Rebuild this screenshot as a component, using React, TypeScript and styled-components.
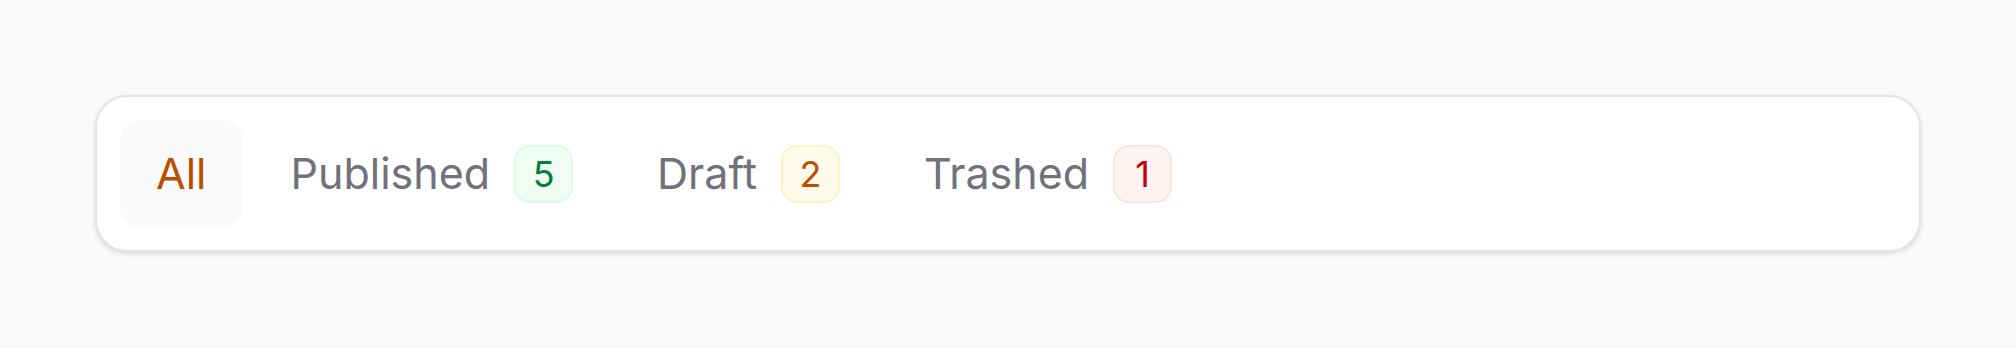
import * as React from 'react';
import styled, { createGlobalStyle } from 'styled-components';

const GlobalStyle = createGlobalStyle`
  html, body {
    margin: 0;
    padding: 0;
    background: #fafafa;
    font-family: Inter, "Noto Sans", sans-serif;
  }
`;

type Tone = 'green' | 'amber' | 'red';

const tones: Record<Tone, { fg: string; bg: string; border: string }> = {
    green: { fg: '#008236', bg: '#f0fdf4', border: '#dcfce7' },
    amber: { fg: '#bb4d00', bg: '#fffbeb', border: '#fef3c6' },
    red: { fg: '#c10007', bg: '#fef2f2', border: '#ffe2e2' },
};

const Page = styled.div`
  padding: 95px 95px 96px 95px;
`;

const Bar = styled.nav`
  display: flex;
  align-items: center;
  gap: 12px;
  padding: 23px;
  background: #ffffff;
  border: 2px solid #e5e5e5;
  border-radius: 32px;
  box-shadow: 0 2px 5px rgba(0, 0, 0, 0.12);
`;

const Tab = styled.button<{ $active?: boolean }>`
  display: inline-flex;
  align-items: center;
  gap: 24px;
  box-sizing: border-box;
  height: 107px;
  padding: 0 36px;
  border: none;
  border-radius: 20px;
  background: ${(p) => (p.$active ? '#fafafa' : 'transparent')};
  color: ${(p) => (p.$active ? '#bb4d00' : '#71717b')};
  font-family: inherit;
  font-size: 43px;
  line-height: 63px;
  font-weight: 400;
  cursor: pointer;
`;

const Count = styled.span<{ $tone: Tone }>`
  display: inline-flex;
  align-items: center;
  justify-content: center;
  box-sizing: border-box;
  min-width: 59px;
  height: 58px;
  padding: 0 16px;
  border-radius: 16px;
  border: 2px solid ${(p) => tones[p.$tone].border};
  background: ${(p) => tones[p.$tone].bg};
  color: ${(p) => tones[p.$tone].fg};
  font-size: 36px;
  line-height: 1;
`;

interface Filter {
    label: string;
    count?: number;
    tone?: Tone;
}

const filters: Filter[] = [
    { label: 'All' },
    { label: 'Published', count: 5, tone: 'green' },
    { label: 'Draft', count: 2, tone: 'amber' },
    { label: 'Trashed', count: 1, tone: 'red' },
];

export default function App(): JSX.Element {
    const [active, setActive] = React.useState('All');

    return (
        <Page>
            <GlobalStyle />
            <Bar>
                {filters.map((f) => (
                    <Tab key={f.label} $active={active === f.label} onClick={() => setActive(f.label)}>
                        {f.label}
                        {f.count !== undefined && f.tone && <Count $tone={f.tone}>{f.count}</Count>}
                    </Tab>
                ))}
            </Bar>
        </Page>
    );
}
